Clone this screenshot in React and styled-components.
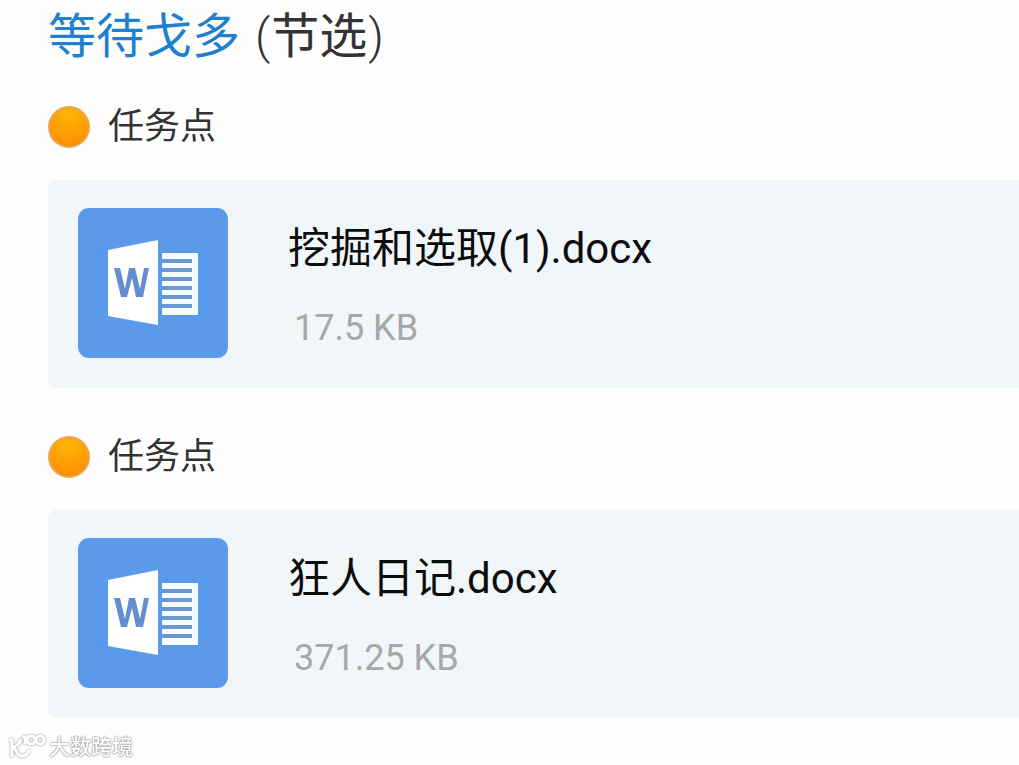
import React from 'react';
import styled, { createGlobalStyle } from 'styled-components';

const GlobalStyle = createGlobalStyle`
  * {
    box-sizing: border-box;
  }
  body {
    margin: 0;
    background: #fefefe;
    color: #333;
    font-family: Roboto, "Noto Sans CJK SC", sans-serif;
  }
`;

const Page = styled.main`
  display: flex;
  flex-direction: column;
  padding-left: 48px;
`;

const Title = styled.h1`
  margin: 0 0 32px;
  font-size: 48px;
  line-height: 74px;
  font-weight: 400;
`;

const TitleLink = styled.a`
  margin-right: 2px;
  color: #1f80d0;
  text-decoration: none;
`;

const Paren = styled.span`
  margin: 0 1px;
  font-weight: 300;
`;

const TaskList = styled.ul`
  display: flex;
  flex-direction: column;
  gap: 48px;
  margin: 0;
  padding: 0;
  list-style: none;
`;

const Task = styled.li`
  display: flex;
  flex-direction: column;
  gap: 32px;
`;

const TaskHeading = styled.h2`
  display: flex;
  align-items: center;
  gap: 18px;
  margin: 0;
  font-size: 36px;
  line-height: 42px;
  font-weight: 400;
`;

const StatusDot = styled.span`
  width: 42px;
  height: 42px;
  border: 2px solid #e8a850;
  border-radius: 50%;
  background: radial-gradient(circle at 50% 20%, #ffb508, #ff9c04 55%, #fb8200);
  background-origin: border-box;
`;

const FileCard = styled.a`
  display: flex;
  align-items: flex-start;
  gap: 60px;
  padding: 28px 30px 30px;
  border-radius: 8px 0 0 8px;
  background: #f1f6f9;
  color: #0c0c0c;
  text-decoration: none;
`;

const FileIcon = styled.svg`
  flex: none;
  width: 150px;
  height: 150px;
`;

const FileDetails = styled.div`
  display: flex;
  flex-direction: column;
  gap: 35px;
  padding-top: 17px;
`;

const FileName = styled.span`
  font-size: 42px;
  line-height: 48px;
`;

const FileSize = styled.span`
  padding-left: 6px;
  color: #a6a8a9;
  font-size: 36px;
  line-height: 40px;
`;

const Watermark = styled.footer`
  position: fixed;
  left: 8px;
  bottom: 4px;
  display: flex;
  align-items: center;
  gap: 2px;
  color: #fff;
  font-size: 21px;
  line-height: 28px;
  font-weight: 500;
  text-shadow: 0 0 1px #888, 0 0 2px #999, 0 0 2px #aaa;
`;

const WatermarkLogo = styled.svg`
  width: 39px;
  height: 28px;
  filter: drop-shadow(0 0 1px #888);
`;

function WordIcon() {
  return (
    <FileIcon viewBox="0 0 150 150" aria-hidden="true">
      <rect width="150" height="150" rx="11" fill="#5b9aea" />
      <path d="M30 42 80 32v85L30 108Z" fill="#fff" />
      <path d="M84 45h36v62H84Z" fill="#f5fcff" />
      <path
        d="M84 53h30M84 62h30M84 71h30M84 80h30M84 89h30M84 98h30"
        stroke="#6c98d2"
        strokeWidth="4"
      />
      <path
        d="M36 60h6l5 21 4-21h6l5 21 4-21h5l-6 29h-7l-4-19-5 19h-6Z"
        fill="#628fcd"
      />
    </FileIcon>
  );
}

function BrandLogo() {
  return (
    <WatermarkLogo viewBox="0 0 39 28" fill="none" stroke="#fff" strokeWidth="3" aria-hidden="true">
      <path d="M1 7h3v17M13 6C12 10 9 13 5 14c3 0 3 9 9 9 4 0 6-2 7-6M14 4h3v7" />
      <circle cx="23" cy="7" r="4" />
      <circle cx="32" cy="7" r="4" />
    </WatermarkLogo>
  );
}

const files = [
  { name: '挖掘和选取(1).docx', size: '17.5 KB' },
  { name: '狂人日记.docx', size: '371.25 KB' },
];

export default function App() {
  return (
    <>
      <GlobalStyle />
      <Page>
        <Title>
          <TitleLink href="#godot">等待戈多</TitleLink> <Paren>(</Paren>节选<Paren>)</Paren>
        </Title>
        <TaskList>
          {files.map((file) => (
            <Task key={file.name}>
              <TaskHeading>
                <StatusDot />
                任务点
              </TaskHeading>
              <FileCard href="#file">
                <WordIcon />
                <FileDetails>
                  <FileName>{file.name}</FileName>
                  <FileSize>{file.size}</FileSize>
                </FileDetails>
              </FileCard>
            </Task>
          ))}
        </TaskList>
      </Page>
      <Watermark>
        <BrandLogo />
        <span>大数跨境</span>
      </Watermark>
    </>
  );
}
